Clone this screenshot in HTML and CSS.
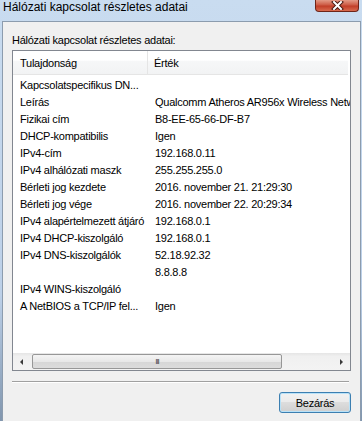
FILE: index.html
```html
<!DOCTYPE html>
<html>
<head>
<meta name="viewport" content="width=device-width, initial-scale=1">
<link rel="stylesheet" href="styles.css">
</head>
<body>

<div class="window">
  <div class="titlebar">
    <span class="title">Hálózati kapcsolat részletes adatai</span>
    <span class="closeBtn">
      <svg width="13" height="9" viewBox="0 0 13 9">
        <path d="M3 1 L10 8 M10 1 L3 8" stroke="#4a1a12" stroke-width="4" stroke-linecap="square"/>
        <path d="M3 1 L10 8 M10 1 L3 8" stroke="#fff" stroke-width="2" stroke-linecap="square"/>
      </svg>
    </span>
  </div>

  <div class="client">
    <div class="caption">Hálózati kapcsolat részletes adatai:</div>

    <div class="listview">
      <div class="lvHeader">
        <div class="hcol first">Tulajdonság</div>
        <div class="hcol">Érték</div>
      </div>

      <div class="lvBody">
        <div class="row"><span>Kapcsolatspecifikus DN...</span><span></span></div>
        <div class="row"><span>Leírás</span><span>Qualcomm Atheros AR956x Wireless Network Adapter</span></div>
        <div class="row"><span>Fizikai cím</span><span>B8-EE-65-66-DF-B7</span></div>
        <div class="row"><span>DHCP-kompatibilis</span><span>Igen</span></div>
        <div class="row"><span>IPv4-cím</span><span>192.168.0.11</span></div>
        <div class="row"><span>IPv4 alhálózati maszk</span><span>255.255.255.0</span></div>
        <div class="row"><span>Bérleti jog kezdete</span><span>2016. november 21. 21:29:30</span></div>
        <div class="row"><span>Bérleti jog vége</span><span>2016. november 22. 20:29:34</span></div>
        <div class="row"><span>IPv4 alapértelmezett átjáró</span><span>192.168.0.1</span></div>
        <div class="row"><span>IPv4 DHCP-kiszolgáló</span><span>192.168.0.1</span></div>
        <div class="row"><span>IPv4 DNS-kiszolgálók</span><span>52.18.92.32</span></div>
        <div class="row"><span></span><span>8.8.8.8</span></div>
        <div class="row"><span>IPv4 WINS-kiszolgáló</span><span></span></div>
        <div class="row"><span>A NetBIOS a TCP/IP fel...</span><span>Igen</span></div>
      </div>

      <div class="hscroll">
        <div class="arrow"><span class="triLeft"></span></div>
        <div class="track">
          <div class="thumb"><span class="grip">III</span></div>
        </div>
        <div class="arrow"><span class="triRight"></span></div>
      </div>
    </div>

    <div class="separator"></div>

    <div class="buttons">
      <button class="btn">Bezárás</button>
    </div>
  </div>
</div>

</body>
</html>
```

FILE: styles.css
```css
body {
  margin: 0;
}

* {
  box-sizing: border-box;
  font-family: "Liberation Sans", Arial, sans-serif;
}

/* Outer window frame */
.window {
  width: 362px;
  height: 421px;
  display: flex;
  flex-direction: column;
  background: linear-gradient(#c9dcf0, #bcd0e8 70%, #8196ae);
}

/* Title bar */
.titlebar {
  height: 21px;
  display: flex;
  justify-content: space-between;
  align-items: flex-start;
  padding-left: 3px;
}

.title {
  font-size: 12px;
  line-height: 14px;
  color: #000;
}

.closeBtn {
  width: 44px;
  height: 12px;
  margin-right: 3px;
  display: flex;
  align-items: center;
  justify-content: center;
  border: 1px solid #6e2418;
  border-top: none;
  border-radius: 0 0 4px 4px;
  background: linear-gradient(#e39a86, #cd5b45 45%, #c13e28 55%, #d86a4e);
}

/* Client area */
.client {
  flex: 1;
  margin: 0 1px 0 2px;
  border: 1px solid #8c9cae;
  border-bottom: none;
  background: #f0f0f0;
  padding: 0 9px;
  font-size: 11px;
  letter-spacing: -0.25px;
  color: #000;
}

.caption {
  padding-top: 12px;
  line-height: 13px;
  margin-bottom: 3px;
}

/* List view */
.listview {
  height: 321px;
  border: 1px solid #828790;
  background: #fff;
  display: flex;
  flex-direction: column;
}

.lvHeader {
  height: 24px;
  display: flex;
  margin-right: 2px;
  border-bottom: 1px solid #e5e5e5;
  background: linear-gradient(#fff 40%, #f6f7f8 45%, #f2f3f4);
}

.hcol {
  padding: 6px 0 0 6px;
  line-height: 13px;
}

.hcol.first {
  width: 135px;
  padding-left: 7px;
  border-right: 1px solid #e5e5e5;
}

.lvBody {
  flex: 1;
  padding-top: 2px;
  overflow: hidden;
}

.row {
  height: 17px;
  line-height: 17px;
  display: grid;
  grid-template-columns: 135px 1fr;
  white-space: nowrap;
}

.row span {
  overflow: hidden;
}

.row span:first-child {
  padding-left: 7px;
}

.row span:last-child {
  padding-left: 7px;
}

/* Horizontal scroll bar */
.hscroll {
  height: 17px;
  display: flex;
  background: linear-gradient(#e5e5e5, #f0f0f0 20%, #f3f3f3);
}

.arrow {
  width: 17px;
  display: flex;
  align-items: center;
  justify-content: center;
}

.triLeft {
  border-style: solid;
  border-width: 3px 3px 3px 0;
  border-color: transparent #3a3a3a transparent transparent;
}

.triRight {
  border-style: solid;
  border-width: 3px 0 3px 3px;
  border-color: transparent transparent transparent #3a3a3a;
}

.track {
  flex: 1;
  padding: 1px 0 1px 2px;
}

.thumb {
  width: 250px;
  height: 15px;
  border: 1px solid #979797;
  border-radius: 2px;
  background: linear-gradient(#f4f4f4, #e8e8e8 50%, #d6d6d6 50%, #dcdcdc);
  display: flex;
  align-items: center;
  justify-content: center;
}

.grip {
  font-size: 8px;
  line-height: 8px;
  color: #444;
  letter-spacing: -1px;
}

/* Etched separator */
.separator {
  margin: 10px 2px 0 0;
  border-top: 1px solid #a0a0a0;
  border-bottom: 1px solid #fff;
}

/* Buttons */
.buttons {
  display: flex;
  justify-content: flex-end;
  padding-top: 9px;
}

.btn {
  width: 72px;
  height: 21px;
  padding: 0;
  font-size: 11px;
  letter-spacing: -0.25px;
  color: #000;
  border: 1px solid #3c7fb1;
  border-radius: 3px;
  background: linear-gradient(#f2f2f2, #ebebeb 45%, #dddddd 50%, #cfcfcf);
  box-shadow: inset 0 0 0 1px #b9e2f8;
}
```
